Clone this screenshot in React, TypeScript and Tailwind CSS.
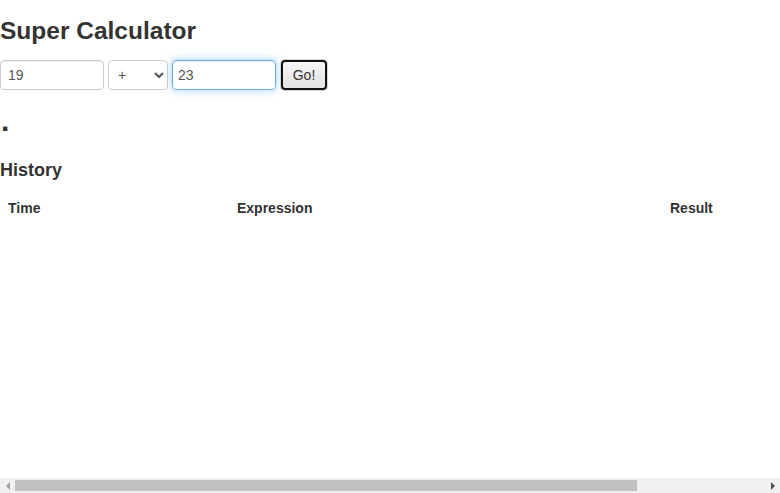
import React from 'react';

const App: React.FC = () => {
  return (
    <div className="min-h-screen bg-white text-[#333] font-['Liberation_Sans',Arial,sans-serif] text-[14px]">
      {/* Title */}
      <h2 className="pt-[18px] text-[24.5px] leading-[26px] font-bold">Super Calculator</h2>

      {/* Calculator form */}
      <div className="mt-[16px] flex items-center">
        <input
          defaultValue="19"
          className="h-[30px] w-[104px] rounded-[4px] border border-[#ccc] px-[7px] text-[14px] text-[#555] outline-none shadow-[inset_0_1px_1px_rgba(0,0,0,.075)]"
        />
        <select
          defaultValue="+"
          className="ml-[4px] h-[30px] w-[60px] rounded-[4px] border border-[#ccc] bg-white pl-[5px] text-[14px] text-[#555] outline-none"
        >
          <option>+</option>
          <option>-</option>
          <option>*</option>
          <option>/</option>
        </select>
        <input
          defaultValue="23"
          className="ml-[4px] h-[30px] w-[104px] rounded-[4px] border border-[#66afe9] px-[5px] text-[14px] text-[#555] outline-none shadow-[inset_0_1px_1px_rgba(0,0,0,.075),0_0_8px_rgba(102,175,233,.6)]"
        />
        <button className="ml-[5px] h-[30px] w-[46px] rounded-[4px] border-2 border-[#111] bg-gradient-to-b from-[#f7f7f7] to-[#e2e2e2] text-[14px] text-[#333] shadow-[0_0_0_1px_#d4d4d4]">
          Go!
        </button>
      </div>

      {/* Result */}
      <div className="mt-[16px] pl-[1px] text-[30px] leading-[30px] font-bold">.</div>

      {/* History */}
      <h3 className="mt-[24px] text-[18px] leading-[20px] font-bold">History</h3>
      <table className="mt-[10px] w-full table-fixed border-collapse">
        <thead>
          <tr>
            <th className="w-[229px] p-[8px] text-left font-bold leading-[21px]">Time</th>
            <th className="w-[433px] p-[8px] text-left font-bold leading-[21px]">Expression</th>
            <th className="p-[8px] text-left font-bold leading-[21px]">Result</th>
          </tr>
        </thead>
        <tbody></tbody>
      </table>

      {/* Horizontal scrollbar */}
      <div className="fixed bottom-0 left-0 flex h-[15px] w-full items-center bg-[#f1f1f1]">
        <div className="flex w-[15px] justify-center">
          <div className="h-0 w-0 border-y-[4px] border-r-[4px] border-y-transparent border-r-[#a3a3a3]"></div>
        </div>
        <div className="h-[11px] w-[622px] bg-[#c1c1c1]"></div>
        <div className="flex-1"></div>
        <div className="flex w-[15px] justify-center">
          <div className="h-0 w-0 border-y-[4px] border-l-[4px] border-y-transparent border-l-[#505050]"></div>
        </div>
      </div>
    </div>
  );
};

export default App;
